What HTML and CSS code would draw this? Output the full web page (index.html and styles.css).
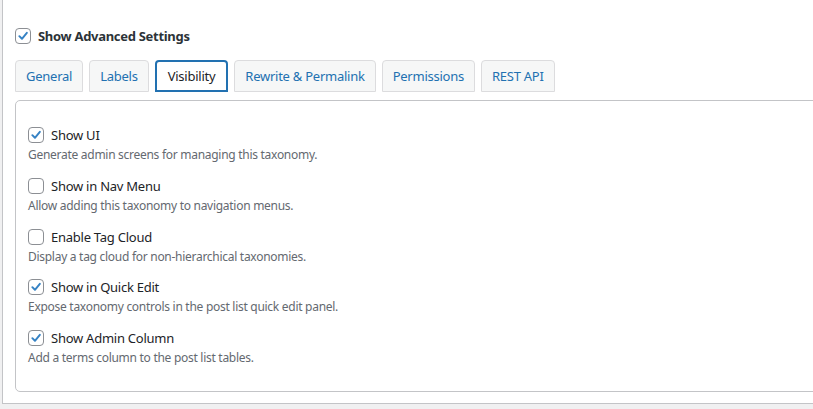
FILE: index.html
```html
<!DOCTYPE html>
<html>
<head>
<meta charset="utf-8">
<link rel="stylesheet" href="styles.css">
</head>
<body>
<div class="frame">
  <label class="adv">
    <span class="cb checked"><svg viewBox="0 0 16 16"><path d="M3.8 8.2 L6.8 11.2 L12.4 4.4"/></svg></span>
    <span class="adv-text">Show Advanced Settings</span>
  </label>
  <div class="tabs">
    <span class="tab">General</span>
    <span class="tab">Labels</span>
    <span class="tab active">Visibility</span>
    <span class="tab">Rewrite &amp; Permalink</span>
    <span class="tab">Permissions</span>
    <span class="tab">REST API</span>
  </div>
  <div class="panel">
    <div class="item">
      <div class="row"><span class="cb checked"><svg viewBox="0 0 16 16"><path d="M3.8 8.2 L6.8 11.2 L12.4 4.4"/></svg></span><span class="lbl">Show UI</span></div>
      <p class="desc">Generate admin screens for managing this taxonomy.</p>
    </div>
    <div class="item">
      <div class="row"><span class="cb"></span><span class="lbl">Show in Nav Menu</span></div>
      <p class="desc">Allow adding this taxonomy to navigation menus.</p>
    </div>
    <div class="item">
      <div class="row"><span class="cb"></span><span class="lbl">Enable Tag Cloud</span></div>
      <p class="desc">Display a tag cloud for non-hierarchical taxonomies.</p>
    </div>
    <div class="item">
      <div class="row"><span class="cb checked"><svg viewBox="0 0 16 16"><path d="M3.8 8.2 L6.8 11.2 L12.4 4.4"/></svg></span><span class="lbl">Show in Quick Edit</span></div>
      <p class="desc">Expose taxonomy controls in the post list quick edit panel.</p>
    </div>
    <div class="item">
      <div class="row"><span class="cb checked"><svg viewBox="0 0 16 16"><path d="M3.8 8.2 L6.8 11.2 L12.4 4.4"/></svg></span><span class="lbl">Show Admin Column</span></div>
      <p class="desc">Add a terms column to the post list tables.</p>
    </div>
  </div>
</div>
</body>
</html>
```

FILE: styles.css
```css
html, body {
  margin: 0;
  padding: 0;
  background: #f0f0f1;
  overflow: hidden;
  font-family: "Noto Sans", "DejaVu Sans", sans-serif;
  color: #1d2327;
}
.frame {
  margin-left: 2px;
  width: calc(100% + 20px);
  height: 404px;
  box-sizing: border-box;
  background: #fff;
  border-left: 1px solid #c3c4c7;
  border-bottom: 1px solid #c3c4c7;
  padding: 28px 0 0 12px;
}
.adv {
  display: flex;
  align-items: center;
  gap: 7px;
  height: 16px;
}
.adv-text {
  font-weight: 700;
  font-size: 13px;
  letter-spacing: -0.3px;
  color: #2c3338;
}
.cb {
  width: 16px;
  height: 16px;
  box-sizing: border-box;
  border: 1px solid #8c8f94;
  border-radius: 4px;
  background: #fff;
  flex: none;
  display: block;
}
.cb svg {
  display: block;
  width: 14px;
  height: 14px;
}
.cb path {
  fill: none;
  stroke: #3582c4;
  stroke-width: 2.2;
  stroke-linecap: round;
  stroke-linejoin: round;
}
.tabs {
  display: flex;
  gap: 6px;
  margin-top: 16px;
}
.tab {
  height: 32px;
  box-sizing: border-box;
  display: flex;
  align-items: center;
  padding: 0 10px;
  border: 1px solid #dcdcde;
  border-radius: 4px 4px 0 0;
  background: #f6f7f7;
  color: #2271b1;
  font-size: 13px;
  letter-spacing: -0.25px;
}
.tab.active {
  border: 2px solid #2271b1;
  background: #fff;
  color: #1d2327;
  padding: 0 11px;
}
.panel {
  margin-top: 8px;
  height: 292px;
  box-sizing: border-box;
  border: 1px solid #c3c4c7;
  border-radius: 5px;
  padding: 26px 12px 0 12px;
}
.item {
  margin-bottom: 14.75px;
}
.row {
  display: flex;
  align-items: center;
  gap: 7px;
  height: 16px;
}
.lbl {
  font-size: 13px;
  letter-spacing: -0.25px;
  color: #1d2327;
}
.desc {
  margin: 4px 0 0;
  font-size: 12px;
  letter-spacing: -0.28px;
  line-height: 16px;
  color: #646970;
}
```
